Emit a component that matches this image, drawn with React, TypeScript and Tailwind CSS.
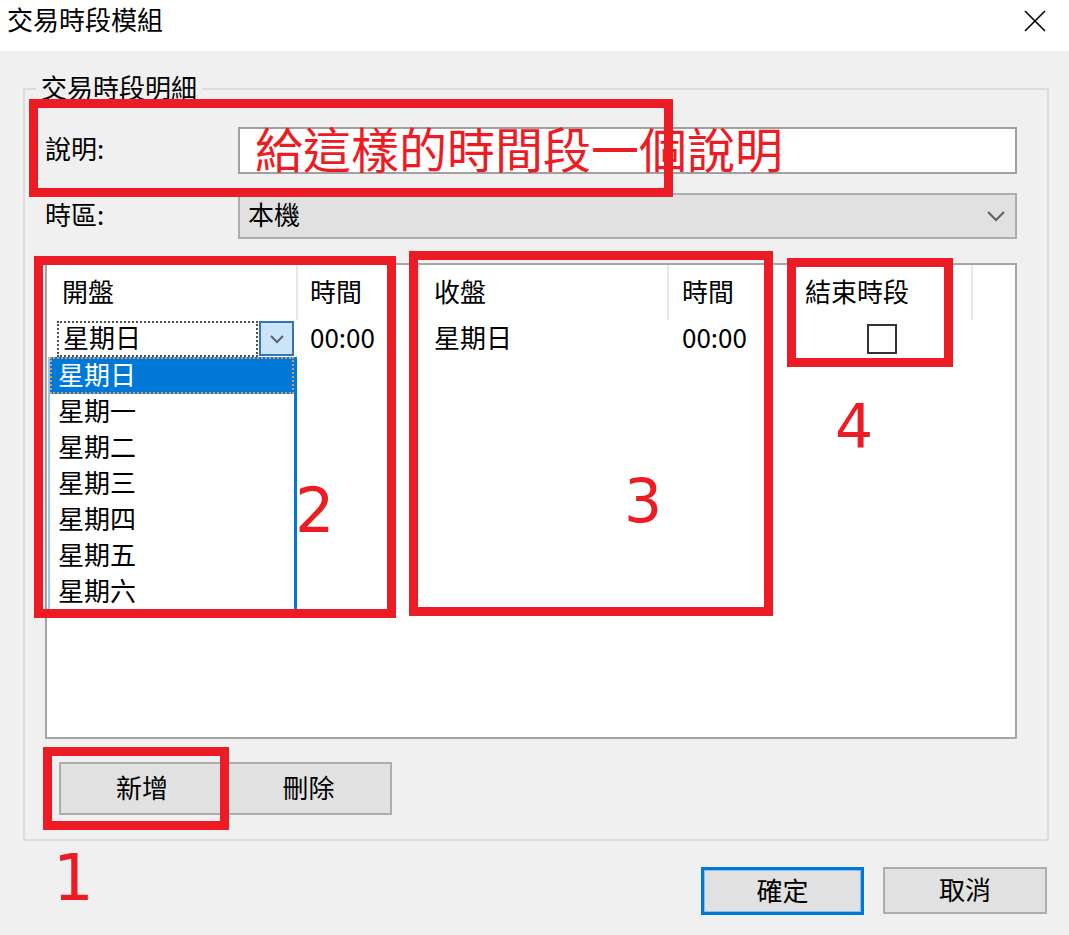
import React from "react";

const F = "font-['Noto_Sans_CJK_TC','Noto_Sans_CJK_SC',sans-serif]";
const NUM = "font-['DejaVu_Sans',sans-serif]";

function Chevron({ color = "#606060" }: { color?: string }) {
  return (
    <svg width="20" height="12" viewBox="0 0 20 12">
      <path d="M2 2 L10 10 L18 2" fill="none" stroke={color} strokeWidth="2" />
    </svg>
  );
}

function SmallChevron() {
  return (
    <svg width="16" height="10" viewBox="0 0 16 10">
      <path d="M2 2 L8 8 L14 2" fill="none" stroke="#5a6470" strokeWidth="2" />
    </svg>
  );
}

export default function App() {
  const days = ["星期日", "星期一", "星期二", "星期三", "星期四", "星期五", "星期六"];
  return (
    <div className={`relative h-[935px] w-[1069px] overflow-hidden bg-[#f0f0f0] text-black ${F}`}>
      {/* title bar */}
      <div className="flex h-[51px] items-start justify-between bg-white">
        <div className="ml-[7px] mt-[6px] text-[26px] leading-none">交易時段模組</div>
        <svg className="mr-[23px] mt-[10px]" width="22" height="22" viewBox="0 0 22 22">
          <path d="M1 1L21 21M21 1L1 21" stroke="#000" strokeWidth="1.6" />
        </svg>
      </div>

      {/* group box */}
      <div className="relative ml-[23px] mt-[37px] h-[753px] w-[1026px] border-2 border-[#dcdcdc]">
        <div className="absolute left-[11px] top-[-16px] bg-[#f0f0f0] px-[5px] text-[26px] leading-none">
          交易時段明細
        </div>
        <div className="flex flex-col pl-[20px]">
          {/* 說明 */}
          <div className="mt-[37px] flex items-center">
            <div className="w-[193px] pb-[5px] text-[26px] leading-none">說明:</div>
            <div className="h-[47px] w-[779px] border-2 border-[#a0a0a0] bg-white pl-[15px]">
              <div className="-mt-[6px] whitespace-nowrap text-[48px] leading-none text-[#ed1c24]">
                給這樣的時間段一個說明
              </div>
            </div>
          </div>
          {/* 時區 */}
          <div className="mt-[19px] flex items-center">
            <div className="w-[193px] pb-[4px] text-[26px] leading-none">時區:</div>
            <div className="flex h-[46px] w-[779px] items-center justify-between border-2 border-[#adadad] bg-[#e1e1e1] pl-[8px] pr-[9px]">
              <span className="pb-[4px] text-[26px] leading-none">本機</span>
              <Chevron />
            </div>
          </div>
          {/* list */}
          <div className="relative mt-[24px] h-[476px] w-[972px] border-2 border-[#a5a5a5] bg-white">
            <div className="flex h-[55px] text-[26px] leading-none">
              <div className="flex w-[251px] items-center border-r-2 border-[#e8e8e8] pb-[4px] pl-[15px]">開盤</div>
              <div className="flex w-[122px] items-center border-r-2 border-[#e8e8e8] pb-[4px] pl-[12px]">時間</div>
              <div className="flex w-[249px] items-center border-r-2 border-[#e8e8e8] pb-[4px] pl-[14px]">收盤</div>
              <div className="flex w-[121px] items-center border-r-2 border-[#e8e8e8] pb-[4px] pl-[13px]">時間</div>
              <div className="flex w-[183px] items-center border-r-2 border-[#e8e8e8] pb-[4px] pl-[15px]">結束時段</div>
            </div>
            <div className="flex h-[37px] items-center text-[26px] leading-none">
              <div className="flex w-[251px] items-center pl-[10px]">
                <div className="flex h-[36px] w-[201px] items-center border-2 border-dotted border-[#505050] pb-[4px] pl-[4px]">
                  星期日
                </div>
                <div className="ml-[1px] flex h-[35px] w-[35px] items-center justify-center border-2 border-[#3474b0] bg-[#cce4f7]">
                  <SmallChevron />
                </div>
              </div>
              <div className="w-[122px] pb-[4px] pl-[12px]">00:00</div>
              <div className="w-[249px] pb-[4px] pl-[14px]">星期日</div>
              <div className="w-[121px] pb-[4px] pl-[13px]">00:00</div>
              <div className="flex w-[183px] justify-center">
                <div className="h-[30px] w-[30px] border-2 border-[#333333] bg-white" />
              </div>
            </div>

            {/* dropdown list */}
            <div className="absolute left-[1px] top-[92px] h-[258px] w-[249px] border-b-2 border-l-2 border-r-[3px] border-b-[#0078d7] border-l-[#9cc8ee] border-r-[#0078d7] bg-white text-[26px] leading-none">
              {days.map((d, i) =>
                i === 0 ? (
                  <div
                    key={d}
                    className="flex h-[37px] items-center border-2 border-dotted border-[#c99a6e] bg-[#0078d7] pb-[3px] pl-[6px] text-white"
                  >
                    {d}
                  </div>
                ) : (
                  <div key={d} className="flex h-[36px] items-center pb-[4px] pl-[8px]">
                    {d}
                  </div>
                )
              )}
            </div>
          </div>
          {/* buttons */}
          <div className="ml-[14px] mt-[23px] flex text-[26px] leading-none">
            <div className="flex h-[53px] w-[166px] items-center justify-center border-2 border-[#adadad] bg-[#e1e1e1] pb-[4px]">
              新增
            </div>
            <div className="flex h-[53px] w-[167px] items-center justify-center border-2 border-[#adadad] bg-[#e1e1e1] pb-[4px]">
              刪除
            </div>
          </div>
        </div>
      </div>

      {/* bottom buttons */}
      <div className="mt-[26px] flex justify-end gap-[19px] pr-[22px] text-[26px] leading-none">
        <div className="flex h-[48px] w-[163px] items-center justify-center border-[3px] border-[#0078d7] bg-[#e1e1e1] pb-[3px] shadow-[inset_0_0_0_1px_#8cc0ec]">
          確定
        </div>
        <div className="flex h-[47px] w-[164px] items-center justify-center border-2 border-[#adadad] bg-[#e1e1e1] pb-[3px]">
          取消
        </div>
      </div>

      {/* red annotations */}
      <div className="pointer-events-none absolute left-[29px] top-[99px] h-[98px] w-[644px] border-[9px] border-[#ed1c24]" />
      <div className="pointer-events-none absolute left-[34px] top-[256px] h-[362px] w-[362px] border-[9px] border-[#ed1c24]" />
      <div className="pointer-events-none absolute left-[409px] top-[251px] h-[365px] w-[364px] border-[9px] border-[#ed1c24]" />
      <div className="pointer-events-none absolute left-[787px] top-[258px] h-[109px] w-[166px] border-[9px] border-[#ed1c24]" />
      <div className="pointer-events-none absolute left-[43px] top-[747px] h-[83px] w-[186px] border-[9px] border-[#ed1c24]" />

      <div className={`absolute left-[53px] top-[846px] text-[64px] leading-none text-[#ed1c24] ${NUM}`}>1</div>
      <div className={`absolute left-[295px] top-[480px] text-[62px] leading-none text-[#ed1c24] ${NUM}`}>2</div>
      <div className={`absolute left-[624px] top-[471px] text-[60px] leading-none text-[#ed1c24] ${NUM}`}>3</div>
      <div className={`absolute left-[835px] top-[396px] text-[60px] leading-none text-[#ed1c24] ${NUM}`}>4</div>
    </div>
  );
}
